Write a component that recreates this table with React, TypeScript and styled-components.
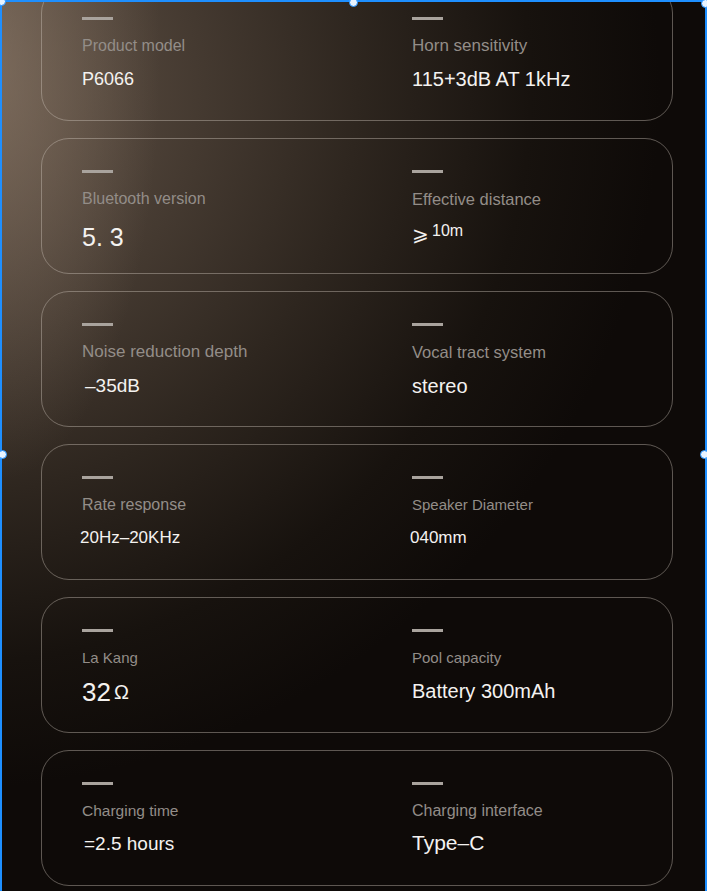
import type { ReactNode } from 'react';
import styled, { createGlobalStyle } from 'styled-components';

const GlobalStyle = createGlobalStyle`
  html, body {
    margin: 0;
    padding: 0;
    background: #0d0a08;
  }
  body {
    font-family: "Liberation Sans", Arial, sans-serif;
  }
`

const Page = styled.div`
  position: relative;
  width: 707px;
  height: 891px;
  overflow: hidden;
  background:
    radial-gradient(ellipse 160px 420px at 0px 60px, rgba(140, 122, 106, 0.55), rgba(140, 122, 106, 0) 100%),
    radial-gradient(ellipse 720px 700px at -60px 90px, #6a5a4c 0%, #4d4137 28%, #2e261f 58%, #17120e 82%, #0e0a08 100%);
`

const CardList = styled.div`
  display: flex;
  flex-direction: column;
  gap: 17px;
  margin-top: -15px;
  padding-left: 41px;
`

const Card = styled.div`
  box-sizing: border-box;
  width: 632px;
  height: 136px;
  border: 1.5px solid rgba(205, 195, 185, 0.42);
  border-radius: 28px;
  display: grid;
  grid-template-columns: 330px 1fr;
  padding: 31px 0 0 40px;
`

const Cell = styled.div`
  display: flex;
  flex-direction: column;
  align-items: flex-start;
`

const Dash = styled.div`
  width: 31px;
  height: 3px;
  background: #a9a39d;
`

const Label = styled.div<{ $size: number }>`
  margin-top: 16px;
  font-size: ${p => p.$size}px;
  line-height: 20px;
  color: #938d88;
  white-space: nowrap;
`

const Value = styled.div<{ $size: number; $shift: number; $down: number }>`
  margin-top: ${p => 12 + p.$down}px;
  margin-left: ${p => p.$shift}px;
  height: 24px;
  display: flex;
  align-items: center;
  font-size: ${p => p.$size}px;
  color: #f4f2f0;
  white-space: nowrap;
`

const Small = styled.span<{ $size: number; $lift?: number }>`
  font-size: ${p => p.$size}px;
  margin-left: 3px;
  position: relative;
  top: ${p => -(p.$lift ?? 0)}px;
`

const Frame = styled.div`
  position: absolute;
  inset: 0 0 -10px 0;
  border: 2px solid #1e8fff;
  pointer-events: none;
`

const Handle = styled.div<{ $x: number; $y: number }>`
  position: absolute;
  left: ${p => p.$x - 4}px;
  top: ${p => p.$y - 4}px;
  width: 7px;
  height: 7px;
  border-radius: 50%;
  background: #e8f3ff;
  border: 1px solid #1e8fff;
`

type Spec = { label: string; labelSize: number; value: ReactNode; size: number; shift?: number; down?: number }

const rows: [Spec, Spec][] = [
  [
    { label: 'Product model', labelSize: 16, value: 'P6066', size: 18, down: -1 },
    { label: 'Horn sensitivity', labelSize: 17, value: '115+3dB AT 1kHz', size: 20, down: -1 },
  ],
  [
    { label: 'Bluetooth version', labelSize: 16, value: '5. 3', size: 25, down: 4 },
    { label: 'Effective distance', labelSize: 16.5, value: <>⩾<Small $size={16} $lift={3}>10m</Small></>, size: 20, down: 1 },
  ],
  [
    { label: 'Noise reduction depth', labelSize: 17, value: '–35dB', size: 19, shift: 3 },
    { label: 'Vocal tract system', labelSize: 16.5, value: 'stereo', size: 20 },
  ],
  [
    { label: 'Rate response', labelSize: 16, value: '20Hz–20KHz', size: 17, shift: -2, down: -1 },
    { label: 'Speaker Diameter', labelSize: 15, value: '040mm', size: 17, shift: -2, down: -1 },
  ],
  [
    { label: 'La Kang', labelSize: 15, value: <>32<Small $size={20}>Ω</Small></>, size: 26 },
    { label: 'Pool capacity', labelSize: 15, value: 'Battery 300mAh', size: 20, down: -1 },
  ],
  [
    { label: 'Charging time', labelSize: 15.5, value: '=2.5 hours', size: 19, shift: 2, down: -1 },
    { label: 'Charging interface', labelSize: 16, value: 'Type–C', size: 21, down: -2 },
  ],
]

const SpecCell = ({ spec }: { spec: Spec }) => (
  <Cell>
    <Dash />
    <Label $size={spec.labelSize}>{spec.label}</Label>
    <Value $size={spec.size} $shift={spec.shift ?? 0} $down={spec.down ?? 0}>{spec.value}</Value>
  </Cell>
)

const App = () => {
  return (
    <Page>
      <GlobalStyle />
      <CardList>
        {rows.map((row, i) => (
          <Card key={i}>
            <SpecCell spec={row[0]} />
            <SpecCell spec={row[1]} />
          </Card>
        ))}
      </CardList>
      <Frame />
      <Handle $x={1} $y={1} />
      <Handle $x={353} $y={2} />
      <Handle $x={705} $y={3} />
      <Handle $x={2} $y={454} />
      <Handle $x={704} $y={454} />
    </Page>
  )
}

export default App
